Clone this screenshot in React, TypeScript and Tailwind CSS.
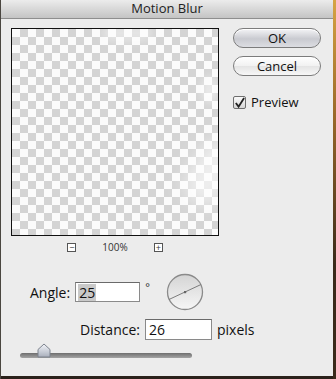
import React from 'react';

const font = "font-['Open_Sans','DejaVu_Sans',sans-serif]";

function AquaButton({ label, dark }: { label: string; dark?: boolean }) {
  return (
    <button
      className={`w-[88px] h-[20px] rounded-full border border-[#7c7c7c] text-[13px] leading-none text-[#111] shadow-[inset_0_1px_0_#fff] ${
        dark
          ? 'bg-[linear-gradient(#f4f4f6,#c9cad0_55%,#dcdde2)]'
          : 'bg-[linear-gradient(#ffffff,#f1f1f1_50%,#e4e4e4_51%,#f7f7f7)]'
      }`}
    >
      {label}
    </button>
  );
}

function Dial() {
  return (
    <svg width="38" height="38" viewBox="0 0 38 38">
      <defs>
        <linearGradient id="dialg" x1="0" y1="0" x2="0" y2="1">
          <stop offset="0" stopColor="#d4d4d4" />
          <stop offset="1" stopColor="#f6f6f6" />
        </linearGradient>
      </defs>
      <circle cx="19" cy="19" r="17.5" fill="url(#dialg)" stroke="#8a8a8a" strokeWidth="1.3" />
      <line x1="3.2" y1="26.4" x2="34.8" y2="11.6" stroke="#6f6f6f" strokeWidth="0.9" />
      <rect x="18" y="18" width="2.2" height="2.2" fill="#666" />
    </svg>
  );
}

function SliderThumb() {
  return (
    <svg width="14" height="15" viewBox="0 0 14 15">
      <defs>
        <linearGradient id="thumbg" x1="0" y1="0" x2="0" y2="1">
          <stop offset="0" stopColor="#f2f4f8" />
          <stop offset="0.6" stopColor="#c7ccd6" />
          <stop offset="1" stopColor="#a9afbb" />
        </linearGradient>
      </defs>
      <path d="M1 14 L1 6.5 L7 1 L13 6.5 L13 14 Z" fill="url(#thumbg)" stroke="#7d838e" strokeWidth="1" strokeLinejoin="round" />
    </svg>
  );
}

export default function App() {
  return (
    <div className={`w-[336px] h-[379px] flex bg-[#2a211a] ${font}`}>
      <div className="w-px bg-[#4a4640]" />
      <div className="w-[332px] h-[376px] flex flex-col bg-[#ececec]">
        <div className="h-[19px] shrink-0 flex items-center justify-center bg-[linear-gradient(#ececec,#c4c4c4)] border-b border-[#8e8e8e] text-[13px] text-[#222]">
          Motion Blur
        </div>

        <div className="flex pt-[9px] pl-[10px]">
          <div className="flex flex-col">
            <div className="relative w-[208px] h-[208px] border border-[#111] overflow-hidden bg-[conic-gradient(#d4d4d4_25%,#fbfbfb_0_50%,#d4d4d4_0_75%,#fbfbfb_0)] bg-[length:16px_16px]">
              <div className="absolute right-[-14px] top-[108px] w-[40px] h-[70px] rotate-[30deg] rounded-full bg-white/60 blur-[9px]" />
              <div className="absolute right-[0px] top-[48px] w-[16px] h-[26px] rounded-full bg-white/50 blur-[5px]" />
              <div className="absolute left-[90px] top-[-4px] w-[50px] h-[16px] rounded-full bg-white/40 blur-[5px]" />
            </div>
            <div className="flex items-center justify-center gap-[26px] mt-[6px] h-[10px] text-[10px] text-[#333]">
              <span className="w-[9px] h-[9px] border border-[#555] bg-white flex items-center justify-center text-[9px] leading-none">−</span>
              <span>100%</span>
              <span className="w-[9px] h-[9px] border border-[#555] bg-white flex items-center justify-center text-[9px] leading-none">+</span>
            </div>
          </div>

          <div className="flex flex-col ml-[14px] gap-[8px]">
            <AquaButton label="OK" dark />
            <AquaButton label="Cancel" />
            <label className="flex items-center gap-[5px] mt-[9px] text-[13px] text-[#111]">
              <span className="w-[13px] h-[13px] border border-[#6e6e6e] bg-[linear-gradient(#fafafa,#d6d6d6)] flex items-center justify-center rounded-[2px]">
                <svg width="12" height="12" viewBox="0 0 12 12">
                  <path d="M2 6 L5 10 L11 0.5" fill="none" stroke="#222" strokeWidth="2" />
                </svg>
              </span>
              Preview
            </label>
          </div>
        </div>

        <div className="flex items-center mt-[21px] h-[38px]">
          <span className="ml-[29px] text-[14px] text-[#111]">Angle:</span>
          <div className="ml-[5px] w-[65px] h-[20px] bg-white border border-[#8a8a8a] border-t-[#6a6a6a] flex items-center px-[2px] text-[14px] text-[#111]">
            <span className="bg-[#c9c9c9] px-[1px] leading-[17px]">25</span>
          </div>
          <span className="ml-[5px] self-start mt-[6px] text-[11px] text-[#333]">°</span>
          <div className="ml-[16px]">
            <Dial />
          </div>
        </div>

        <div className="flex items-center mt-[8px] h-[21px]">
          <span className="ml-[79px] text-[14px] text-[#111]">Distance:</span>
          <div className="ml-[5px] w-[67px] h-[21px] bg-white border border-[#8a8a8a] border-t-[#6a6a6a] flex items-center px-[3px] text-[14px] text-[#111]">
            26
          </div>
          <span className="ml-[5px] text-[14px] text-[#111]">pixels</span>
        </div>

        <div className="relative ml-[19px] mt-[13px] w-[172px] h-[5px] rounded-full bg-[linear-gradient(#6e6e6e,#a4a4a4)]">
          <div className="absolute left-[17px] top-[-10px]">
            <SliderThumb />
          </div>
        </div>
      </div>
      <div className="flex-1 bg-[linear-gradient(#d6a444,#9b6a2a_30%,#3a2a1a_70%)]" />
    </div>
  );
}
